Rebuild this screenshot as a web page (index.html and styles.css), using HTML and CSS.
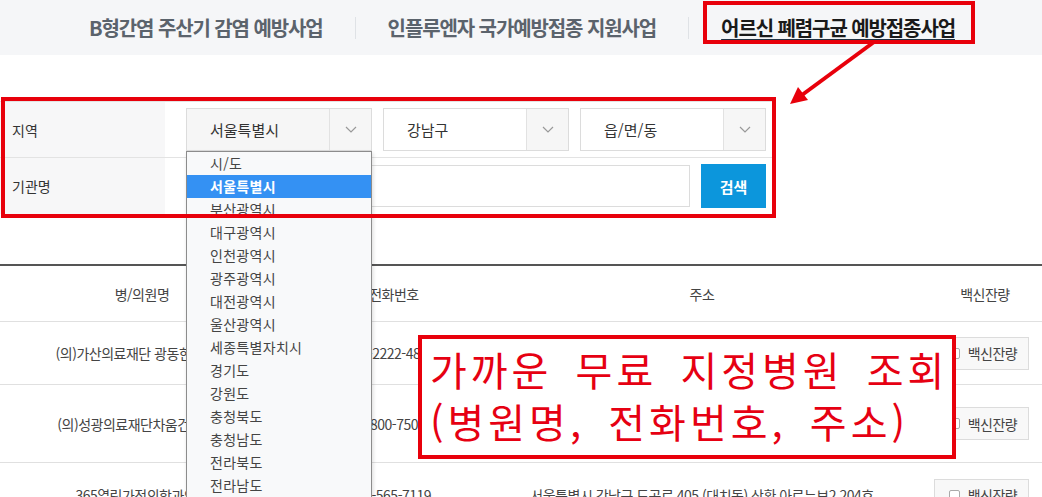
FILE: index.html
```html
<!DOCTYPE html>
<html lang="ko">
<head>
    <meta charset="UTF-8">
    <meta name="viewport" content="width=device-width, initial-scale=1.0">
    <title>어르신 폐렴구균 예방접종사업</title>
    <link rel="stylesheet" href="styles.css">
</head>
<body>
<div class="page">

    <!-- 사업 탭 -->
    <div class="tabs">
        <a class="tab">B형간염 주산기 감염 예방사업</a>
        <span class="tab-sep"></span>
        <a class="tab">인플루엔자 국가예방접종 지원사업</a>
        <span class="tab-sep"></span>
        <a class="tab on">어르신 폐렴구균 예방접종사업</a>
    </div>

    <!-- 검색 -->
    <div class="search">
        <div class="search-row">
            <div class="search-label">지역</div>
            <div class="search-field">
                <div class="select open">
                    <span class="select-text">서울특별시</span>
                    <span class="select-arrow"><svg width="12" height="7" viewBox="0 0 12 7"><polyline points="1,1 6,6 11,1" fill="none" stroke="#999" stroke-width="1.2"/></svg></span>
                </div>
                <div class="select">
                    <span class="select-text">강남구</span>
                    <span class="select-arrow"><svg width="12" height="7" viewBox="0 0 12 7"><polyline points="1,1 6,6 11,1" fill="none" stroke="#999" stroke-width="1.2"/></svg></span>
                </div>
                <div class="select">
                    <span class="select-text">읍/면/동</span>
                    <span class="select-arrow"><svg width="12" height="7" viewBox="0 0 12 7"><polyline points="1,1 6,6 11,1" fill="none" stroke="#999" stroke-width="1.2"/></svg></span>
                </div>
            </div>
        </div>
        <div class="search-row">
            <div class="search-label">기관명</div>
            <div class="search-field">
                <input type="text" class="name-input">
                <button class="btn-search">검색</button>
            </div>
        </div>
    </div>

    <!-- 병의원 목록 -->
    <table class="list">
        <colgroup>
            <col style="width:284px">
            <col style="width:220px">
            <col style="width:396px">
            <col>
        </colgroup>
        <thead>
            <tr>
                <th>병/의원명</th>
                <th>전화번호</th>
                <th>주소</th>
                <th class="col-vac">백신잔량</th>
            </tr>
        </thead>
        <tbody>
            <tr class="row1">
                <td>(의)가산의료재단 광동한방병원</td>
                <td>02-2222-4888</td>
                <td>서울특별시 강남구 봉은사로 612 (삼성동)</td>
                <td class="col-vac"><button class="btn-vac"><i class="chk"></i>백신잔량</button></td>
            </tr>
            <tr class="row2">
                <td>(의)성광의료재단차움건강검진</td>
                <td>1800-7500</td>
                <td>서울특별시 강남구 도산대로 442<br>(청담동) 피엔폴루스</td>
                <td class="col-vac"><button class="btn-vac"><i class="chk"></i>백신잔량</button></td>
            </tr>
            <tr>
                <td>365열린가정의학과의원</td>
                <td>02-565-7119</td>
                <td>서울특별시 강남구 도곡로 405 (대치동) 삼환 아르누보2 204호</td>
                <td class="col-vac"><button class="btn-vac"><i class="chk"></i>백신잔량</button></td>
            </tr>
        </tbody>
    </table>

    <!-- 열린 시/도 목록 -->
    <ul class="options">
        <li>시/도</li>
        <li class="sel">서울특별시</li>
        <li>부산광역시</li>
        <li>대구광역시</li>
        <li>인천광역시</li>
        <li>광주광역시</li>
        <li>대전광역시</li>
        <li>울산광역시</li>
        <li>세종특별자치시</li>
        <li>경기도</li>
        <li>강원도</li>
        <li>충청북도</li>
        <li>충청남도</li>
        <li>전라북도</li>
        <li>전라남도</li>
        <li>경상북도</li>
        <li>경상남도</li>
        <li>제주특별자치도</li>
    </ul>

    <!-- 설명 표시 -->
    <div class="mark mark-tab"></div>
    <div class="mark mark-search"></div>
    <svg class="mark-arrow" width="100" height="70" viewBox="0 0 100 70">
        <line x1="88" y1="2" x2="16" y2="55" stroke="#e8000b" stroke-width="4"/>
        <polygon points="4,64 12,47 22,60" fill="#e8000b"/>
    </svg>
    <div class="note">가까운 무료 지정병원 조회<br>(병원명, 전화번호, 주소)</div>

</div>
</body>
</html>
```

FILE: styles.css
```css
html, body {
    margin: 0;
    overflow: hidden;
}
body {
    font-family: "Noto Sans CJK KR", "Noto Sans", sans-serif;
    color: #333;
    background: #fff;
}
.page {
    position: relative;
    width: 1042px;
}

/* 탭 */
.tabs {
    height: 55px;
    background: #f5f6f8;
    display: flex;
    align-items: center;
    justify-content: center;
    gap: 32px;
    padding-left: 2px;
}
.tab {
    font-size: 20px;
    font-weight: 700;
    letter-spacing: -1.1px;
    color: #5b636c;
    line-height: 24px;
}
.tab.on {
    color: #1a1a1a;
    text-decoration: underline;
    text-decoration-color: #234;
    text-underline-offset: 3px;
}
.tab-sep {
    width: 1px;
    height: 22px;
    background: #dfe2e6;
}

/* 검색 */
.search {
    margin-top: 46px;
    width: 772px;
    border-top: 1px solid #e3e3e3;
}
.search-row {
    display: flex;
    border-bottom: 1px solid #e3e3e3;
}
.search-row:first-child {
    height: 55px;
}
.search-row:last-child {
    height: 56px;
    border-bottom: none;
}
.search-label {
    width: 153px;
    padding-left: 12px;
    background: #f7f7f8;
    display: flex;
    align-items: center;
    font-size: 14px;
    color: #333;
}
.search-field {
    display: flex;
    align-items: center;
    gap: 11px;
    padding-left: 21px;
}
.select {
    width: 184px;
    height: 41px;
    border: 1px solid #dcdcdc;
    background: #fff;
    display: flex;
}
.select.open {
    background: #f6f6f6;
}
.select-text {
    flex: 1;
    padding-left: 23px;
    font-size: 15px;
    line-height: 41px;
    color: #333;
}
.select-arrow {
    width: 41px;
    border-left: 1px solid #e2e2e2;
    background: #f6f6f6;
    display: flex;
    align-items: center;
    justify-content: center;
}
.name-input {
    width: 502px;
    height: 40px;
    border: 1px solid #dcdcdc;
    margin: 0;
    padding: 0;
    box-sizing: content-box;
}
.btn-search {
    width: 65px;
    height: 44px;
    border: none;
    background: #0c96dc;
    color: #fff;
    font-family: inherit;
    font-size: 15px;
    font-weight: 700;
}

/* 목록 */
.list {
    margin-top: 50px;
    width: 1042px;
    border-collapse: collapse;
    table-layout: fixed;
    border-top: 2px solid #555;
}
.list th,
.list td {
    text-align: center;
    font-size: 14px;
    color: #444;
    font-weight: 400;
    padding: 0;
    border-bottom: 1px solid #e0e0e0;
    letter-spacing: -0.5px;
    white-space: nowrap;
    overflow: hidden;
}
.list th {
    height: 55px;
}
.list .row1 td {
    height: 62px;
}
.list .row2 td {
    height: 77px;
    line-height: 22px;
}
.list td {
    height: 64px;
}
.col-vac {
    padding-left: 28px !important;
}
.btn-vac {
    width: 95px;
    height: 33px;
    border: 1px solid #dcdcdc;
    background: #f8f8f8;
    font-family: inherit;
    font-size: 14px;
    color: #444;
    letter-spacing: -0.5px;
    display: inline-flex;
    align-items: center;
    justify-content: center;
    gap: 8px;
    padding: 0 0 0 4px;
    margin-left: -8px;
}
.chk {
    width: 9px;
    height: 9px;
    border: 1px solid #aaa;
    border-radius: 2px;
    background: #fff;
}

/* 시/도 목록 */
.options {
    position: absolute;
    left: 186px;
    top: 151px;
    width: 184px;
    margin: 0;
    padding: 0;
    list-style: none;
    background: #f8f9fa;
    border: 1px solid #8c8c8c;
    box-shadow: 1px 2px 4px rgba(0, 0, 0, 0.15);
}
.options li {
    height: 23px;
    line-height: 23px;
    padding-left: 23px;
    font-size: 14px;
    color: #444;
    letter-spacing: 0.3px;
}
.options li.sel {
    background: #3491f3;
    color: #fff;
    font-weight: 700;
}

/* 설명 표시 */
.mark {
    position: absolute;
    border: 4px solid #e8000b;
}
.mark-tab {
    left: 703px;
    top: 1px;
    width: 264px;
    height: 35px;
}
.mark-search {
    left: 1px;
    top: 97px;
    width: 767px;
    height: 113px;
}
.mark-arrow {
    position: absolute;
    left: 786px;
    top: 40px;
}
.note {
    position: absolute;
    left: 418px;
    top: 335px;
    width: 522px;
    height: 112px;
    padding: 4px 0 0 8px;
    border: 4px solid #e8000b;
    background: #fff;
    color: #e60012;
    font-size: 40px;
    line-height: 52px;
    letter-spacing: 4px;
    word-spacing: 8px;
    white-space: nowrap;
}
```
